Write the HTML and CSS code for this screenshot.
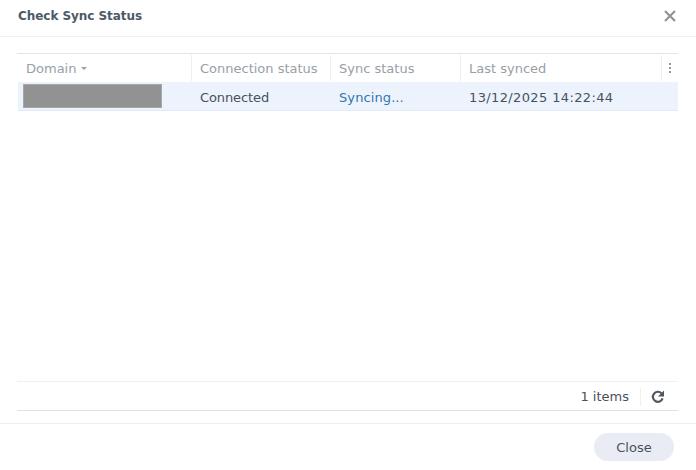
FILE: index.html
```html
<!DOCTYPE html>
<html lang="en">
<head>
<meta charset="utf-8">
<title>Check Sync Status</title>
<link rel="stylesheet" href="styles.css">
</head>
<body>
<div class="dialog">
  <header class="titlebar">
    <h1 class="title">Check Sync Status</h1>
    <svg class="close-x" width="12" height="12" viewBox="0 0 12 12"><path d="M1 1 L11 11 M11 1 L1 11" fill="none" stroke="#8d949c" stroke-width="2.2"/></svg>
  </header>
  <main class="content">
    <div class="grid">
      <div class="row head">
        <div class="cell c1">Domain<span class="sort"></span></div>
        <div class="cell c2">Connection status</div>
        <div class="cell c3">Sync status</div>
        <div class="cell c4">Last synced</div>
        <div class="cell c5"><span class="dots"><i></i><i></i><i></i></span></div>
      </div>
      <div class="row selected">
        <div class="cell c1"><div class="redact"></div></div>
        <div class="cell c2">Connected</div>
        <div class="cell c3 syncing">Syncing...</div>
        <div class="cell c4 stamp">13/12/2025 14:22:44</div>
      </div>
    </div>
    <div class="pager">
      <span class="count">1 items</span>
      <span class="refresh">
        <svg width="14" height="14" viewBox="0 0 14 14"><path d="M11.6 8.4 A5 5 0 1 1 10.4 3.2" fill="none" stroke="#4e5660" stroke-width="2.2"/><path d="M13 0.6 V6.6 H7 Z" fill="#4e5660"/></svg>
      </span>
    </div>
  </main>
  <footer class="footer">
    <button class="close-btn">Close</button>
  </footer>
</div>
</body>
</html>
```
FILE: styles.css
```css
* { box-sizing: border-box; }
html, body { margin: 0; padding: 0; }
body {
  width: 696px;
  height: 470px;
  background: #fff;
  font-family: "DejaVu Sans", sans-serif;
  font-size: 13px;
  color: #49515b;
  overflow: hidden;
}
.dialog { display: flex; flex-direction: column; height: 470px; }
.titlebar {
  height: 37px;
  flex: none;
  display: flex;
  align-items: center;
  justify-content: space-between;
  padding: 0 20px 5px 18px;
  border-bottom: 1px solid #eef0f2;
}
.title { margin: 0; font-size: 12px; font-weight: 700; color: #4e5966; letter-spacing: -0.05px; }
.content {
  flex: 1;
  display: flex;
  flex-direction: column;
  margin-top: 16px;
  padding: 0 18px 0 17px;
}
.grid { flex: 1; border-top: 1px solid #e3e5e8; }
.row { display: flex; }
.head { height: 29px; color: #98a0a8; padding-top: 1px; }
.head .cell { height: 26px; border-right: 1px solid #eceef0; }
.head .c5 { border-right: 0; flex: 1; }
.selected {
  height: 29px;
  background: #edf3fd;
  border-bottom: 1px solid #e3ebf6;
  width: 660px;
  margin-left: 1px;
  margin-top: -1px;
  padding-top: 2px;
}
.cell { display: flex; align-items: center; padding-left: 8px; flex: none; white-space: nowrap; }
.c1 { width: 175px; padding-left: 9px; }
.c2 { width: 139px; }
.c3 { width: 130px; }
.c4 { width: 201px; }
.head .c5 { padding-left: 0; justify-content: center; }
.selected .c1 { width: 174px; padding-left: 5px; margin-top: -2px; }
.stamp { letter-spacing: 0.37px; }
.redact { width: 139px; height: 24px; background: #929292; border: 1px solid #a4a8ac; }
.syncing { color: #2f78b0; letter-spacing: 0.1px; }
.selected .c2 { letter-spacing: -0.1px; }
.sort {
  width: 0; height: 0;
  margin-left: 5px;
  margin-top: 1px;
  border-left: 3px solid transparent;
  border-right: 3px solid transparent;
  border-top: 3px solid #98a0a8;
}
.dots { display: flex; flex-direction: column; gap: 2px; }
.dots i { display: block; width: 2px; height: 2px; background: #8f969e; }
.pager {
  height: 30px;
  flex: none;
  display: flex;
  align-items: center;
  justify-content: flex-end;
  border-top: 1px solid #eef0f2;
  border-bottom: 1px solid #dfe1e4;
  margin-bottom: 12px;
  padding-top: 1px;
}
.count { padding-right: 11px; border-right: 1px solid #eef0f2; line-height: 18px; }
.refresh { display: flex; width: 34px; justify-content: center; margin-right: 3px; }
.footer {
  height: 47px;
  flex: none;
  border-top: 1px solid #eceef0;
  display: flex;
  align-items: flex-start;
  justify-content: flex-end;
  padding: 9px 22px 0 0;
}
.close-btn {
  width: 80px;
  height: 28px;
  border: 0;
  border-radius: 14px;
  background: #eaecf5;
  color: #49515b;
  font: 13px "DejaVu Sans", sans-serif;
}
```
